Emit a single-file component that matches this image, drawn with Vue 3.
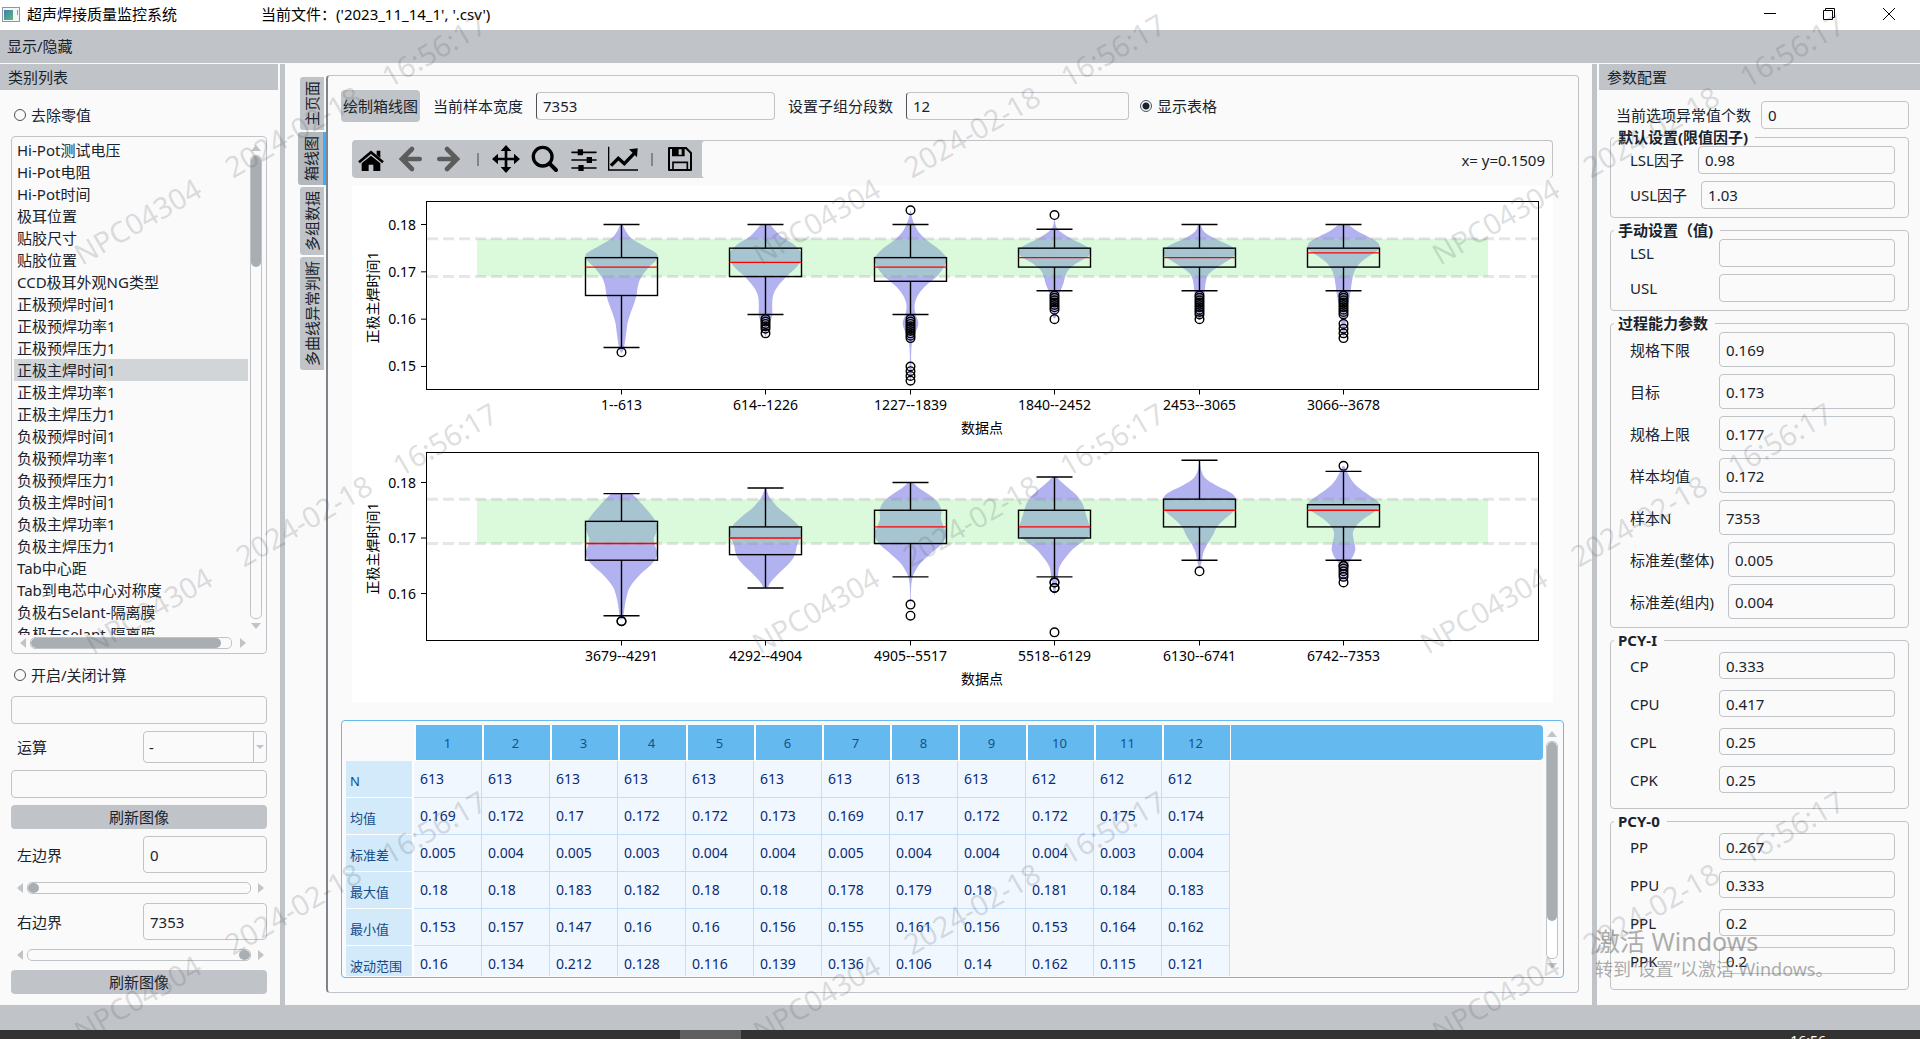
<script setup>
import { ref } from 'vue'

const categories = [
  'Hi-Pot测试电压', 'Hi-Pot电阻', 'Hi-Pot时间', '极耳位置', '贴胶尺寸', '贴胶位置',
  'CCD极耳外观NG类型', '正极预焊时间1', '正极预焊功率1', '正极预焊压力1', '正极主焊时间1',
  '正极主焊功率1', '正极主焊压力1', '负极预焊时间1', '负极预焊功率1', '负极预焊压力1',
  '负极主焊时间1', '负极主焊功率1', '负极主焊压力1', 'Tab中心距', 'Tab到电芯中心对称度',
  '负极右Selant-隔离膜', '负极左Selant-隔离膜'
]
const selected = ref('正极主焊时间1')
const tabs = ['主页面', '箱线图', '多组数据', '多曲线异常判断']
const activeTab = ref('箱线图')
const leftBound = ref(0)
const rightBound = ref(7353)

const groups = [
  { title: '默认设置(限值因子)', kind: 'tight', rows: [['LSL因子', '0.98'], ['USL因子', '1.03']] },
  { title: '手动设置（值)', kind: '', rows: [['LSL', ''], ['USL', '']] },
  {
    title: '过程能力参数', kind: 'grow', rows: [
      ['规格下限', '0.169'], ['目标', '0.173'], ['规格上限', '0.177'], ['样本均值', '0.172'],
      ['样本N', '7353'], ['标准差(整体)', '0.005'], ['标准差(组内)', '0.004']
    ]
  },
  { title: 'PCY-I', kind: 'airy', rows: [['CP', '0.333'], ['CPU', '0.417'], ['CPL', '0.25'], ['CPK', '0.25']] },
  { title: 'PCY-0', kind: 'airy', rows: [['PP', '0.267'], ['PPU', '0.333'], ['PPL', '0.2'], ['PPK', '0.2']] }
]

const stats = [
  ['N', '613', '613', '613', '613', '613', '613', '613', '613', '613', '612', '612', '612'],
  ['均值', '0.169', '0.172', '0.17', '0.172', '0.172', '0.173', '0.169', '0.17', '0.172', '0.172', '0.175', '0.174'],
  ['标准差', '0.005', '0.004', '0.005', '0.003', '0.004', '0.004', '0.005', '0.004', '0.004', '0.004', '0.003', '0.004'],
  ['最大值', '0.18', '0.18', '0.183', '0.182', '0.18', '0.18', '0.178', '0.179', '0.18', '0.181', '0.184', '0.183'],
  ['最小值', '0.153', '0.157', '0.147', '0.16', '0.16', '0.156', '0.155', '0.161', '0.156', '0.153', '0.164', '0.162'],
  ['波动范围', '0.16', '0.134', '0.212', '0.128', '0.116', '0.139', '0.136', '0.106', '0.14', '0.162', '0.115', '0.121']
]

// Box plots: [low whisker, q1, median, q3, high whisker] in thousandths.
// Violin profile: [y, half width] pairs in thirds of a pixel below the origin.
const centers = [621.5, 765.5, 910.5, 1054.5, 1199.5, 1343.5]
const charts = [
  {
    top: 201.5, bottom: 389.5, y180: 224.5, step: 4.733, origin: 60, ticks: [180, 170, 160, 150],
    items: [
      { label: '1--613', box: [154, 165, 171, 173, 180], out: [153], k: 3,
        v: [[493, 3], [515, 14], [535, 30], [555, 62], [575, 98], [585, 108], [600, 104], [622, 82], [650, 60], [675, 50], [706, 45], [730, 38], [760, 27], [790, 18], [820, 14], [860, 8], [878, 2]] },
      { label: '614--1226', box: [161, 169, 172, 175, 180], out: [160, 159.5, 159, 158.5, 158, 157], k: 3,
        v: [[493, 14], [510, 28], [530, 48], [550, 80], [570, 102], [585, 108], [600, 107], [625, 90], [650, 62], [680, 36], [706, 23], [735, 20], [765, 20], [790, 13], [820, 4], [830, 1]] },
      { label: '1227--1839', box: [161, 168, 171, 173, 180], out: [183, 160, 159.5, 159, 158.5, 158, 157.5, 157, 156.5, 156, 150, 149, 148, 147], k: 3,
        v: [[452, 1], [475, 5], [493, 12], [515, 24], [540, 48], [565, 82], [590, 106], [605, 107], [625, 98], [650, 78], [675, 48], [700, 26], [725, 14], [745, 12], [765, 16], [785, 23], [800, 22], [820, 14], [845, 5], [880, 2], [905, 2], [935, 4], [963, 1]] },
      { label: '1840--2452', box: [166, 171, 173, 175, 179], out: [182, 165, 164.5, 164, 163.5, 163, 162.5, 162, 160], k: 3,
        v: [[478, 1], [500, 5], [515, 18], [535, 48], [550, 78], [565, 104], [575, 108], [590, 100], [610, 66], [630, 42], [650, 32], [670, 27], [690, 19], [710, 13], [740, 10], [775, 3]] },
      { label: '2453--3065', box: [166, 171, 173, 175, 180], out: [165, 164.5, 164, 163.5, 163, 162.5, 162, 161.5, 161, 160], k: 3,
        v: [[493, 3], [515, 14], [535, 44], [555, 88], [570, 107], [585, 107], [600, 88], [620, 56], [640, 30], [660, 20], [690, 16], [720, 13], [750, 9], [780, 3]] },
      { label: '3066--3678', box: [166, 171, 174, 175, 180], out: [165, 164.5, 164, 163.5, 163, 162.5, 162, 161.5, 161, 159, 158, 157, 156], k: 3,
        v: [[493, 14], [510, 36], [530, 74], [545, 100], [558, 108], [570, 104], [585, 82], [605, 54], [625, 38], [650, 28], [690, 22], [720, 17], [750, 10], [790, 7], [830, 2]] }
    ]
  },
  {
    top: 452.5, bottom: 640.5, y180: 482.5, step: 5.55, origin: 430, ticks: [180, 170, 160],
    items: [
      { label: '3679--4291', box: [156, 166, 169, 173, 178], out: [155, 155], k: 2.529,
        v: [[190, 25], [210, 42], [240, 65], [270, 85], [290, 91], [310, 87], [325, 82], [340, 83], [365, 90], [385, 87], [405, 74], [435, 46], [470, 22], [500, 13], [530, 8], [568, 4]] },
      { label: '4292--4904', box: [161, 167, 170, 172, 179], out: [], k: 2.529,
        v: [[176, 2], [205, 12], [235, 34], [260, 60], [285, 82], [305, 91], [322, 88], [345, 80], [375, 74], [400, 60], [430, 34], [455, 14], [472, 6]] },
      { label: '4905--5517', box: [163, 169, 172, 175, 180], out: [158, 156], k: 2.529,
        v: [[157, 5], [175, 22], [195, 48], [215, 68], [240, 78], [265, 77], [290, 84], [305, 91], [325, 88], [345, 76], [370, 52], [400, 25], [430, 9], [455, 3], [490, 1], [520, 1]] },
      { label: '5518--6129', box: [163, 170, 172, 175, 181], out: [162, 162, 161, 161, 153], k: 2.376,
        v: [[140, 4], [155, 16], [175, 34], [195, 52], [220, 66], [250, 74], [275, 80], [300, 86], [315, 84], [330, 72], [355, 46], [380, 28], [410, 12], [440, 8], [470, 4], [495, 1]] },
      { label: '6130--6741', box: [166, 172, 175, 177, 184], out: [164], k: 2.376,
        v: [[92, 1], [120, 4], [145, 14], [165, 38], [185, 70], [200, 84], [225, 86], [245, 80], [265, 62], [290, 42], [315, 32], [340, 20], [365, 10], [390, 6], [415, 1]] },
      { label: '6742--7353', box: [166, 172, 175, 176, 182], out: [183, 165, 165, 164.5, 164, 163.5, 163, 162], k: 2.376,
        v: [[108, 2], [130, 10], [155, 22], [175, 38], [195, 60], [215, 82], [228, 86], [245, 74], [265, 50], [285, 32], [305, 23], [320, 23], [340, 26], [360, 28], [380, 22], [400, 12], [430, 6], [455, 2]] }
    ]
  }
]

const toY = (c, v) => c.y180 + (180 - v) * c.step

function smooth(pts) {
  let d = ''
  for (let i = 0; i < pts.length - 1; i++) {
    const a = pts[Math.max(i - 1, 0)]
    const b = pts[i]
    const n = pts[i + 1]
    const e = pts[Math.min(i + 2, pts.length - 1)]
    const q = [b[0] + (n[0] - a[0]) / 6, b[1] + (n[1] - a[1]) / 6, n[0] - (e[0] - b[0]) / 6, n[1] - (e[1] - b[1]) / 6, n[0], n[1]]
    d += 'C' + q.map((x) => x.toFixed(1)).join(' ')
  }
  return d
}

function violin(c, item, i) {
  const at = (s) => item.v.map(([y, w]) => [centers[i] + (s * w) / item.k, c.origin + y / 3])
  const right = at(1)
  const left = at(-1).reverse()
  return `M${right[0]}${smooth(right)}L${left[0]}${smooth(left)}Z`
}

const marks = [
  [82, 266], [761, 266], [1440, 266],
  [93, 655], [760, 655], [1428, 655],
  [82, 1043], [761, 1043], [1440, 1043]
]
</script>

<template>
  <div class="window">
    <header class="titlebar">
      <svg class="app-icon" width="18" height="15" viewBox="0 0 18 15" aria-hidden="true">
        <defs>
          <linearGradient id="appfill" x1="0" y1="0" x2="1" y2="1">
            <stop offset="0" stop-color="#3d7fb5" />
            <stop offset="1" stop-color="#5fb878" />
          </linearGradient>
        </defs>
        <rect x="0.5" y="0.5" width="17" height="14" fill="#f3f5f6" stroke="#8c979e" />
        <rect x="2" y="3" width="9" height="10" fill="url(#appfill)" />
        <rect x="15" y="3" width="1" height="5" fill="#5fb878" />
      </svg>
      <h1>超声焊接质量监控系统</h1>
      <span class="file">当前文件：('2023_11_14_1', '.csv')</span>
      <div class="controls">
        <button aria-label="最小化"><svg width="14" height="14"><path d="M1 6.5H13" /></svg></button>
        <button aria-label="还原"><svg width="14" height="14"><path d="M1.5 3.5H10.5V12.5H1.5ZM3.5 3.500V1.5H12.500V10.500H10.500" /></svg></button>
        <button aria-label="关闭"><svg width="14" height="14"><path d="M1 1L13 13M13 1L1 13" /></svg></button>
      </div>
    </header>
    <nav class="menubar"><button>显示/隐藏</button></nav>

    <main class="body">
      <aside class="dock left">
        <h2>类别列表</h2>
        <div class="left-content">
          <label class="radio"><input type="radio" name="zero" />去除零值</label>
          <div class="listbox">
            <div class="list-row">
              <ul>
                <li v-for="c in categories" :key="c" :class="{ on: c === selected }" @click="selected = c">{{ c }}</li>
              </ul>
              <div class="vbar" aria-hidden="true">
                <i class="tri up"></i><div class="track"><div class="thumb"></div></div><i class="tri down"></i>
              </div>
            </div>
            <div class="hbar" aria-hidden="true">
              <i class="tri lt"></i><div class="track"><div class="thumb"></div></div><i class="tri rt"></i>
            </div>
          </div>
          <label class="radio"><input type="radio" name="calc" />开启/关闭计算</label>
          <input class="field" aria-label="操作数一" />
          <div class="pair">
            <label for="op">运算</label>
            <div class="select"><select id="op"><option>-</option><option>+</option></select></div>
          </div>
          <input class="field" aria-label="操作数二" />
          <button class="action">刷新图像</button>
          <div class="pair tall"><label for="lb">左边界</label><input id="lb" v-model="leftBound" class="field" /></div>
          <div class="slider"><i class="tri lt"></i><input v-model="leftBound" type="range" min="0" max="7353" aria-label="左边界滑块" /><i class="tri rt"></i></div>
          <div class="pair tall"><label for="rb">右边界</label><input id="rb" v-model="rightBound" class="field" /></div>
          <div class="slider"><i class="tri lt"></i><input v-model="rightBound" type="range" min="0" max="7353" aria-label="右边界滑块" /><i class="tri rt"></i></div>
          <button class="action">刷新图像</button>
        </div>
      </aside>

      <section class="center">
        <div class="tabs" role="tablist">
          <button v-for="t in tabs" :key="t" role="tab" :aria-selected="t === activeTab" :class="{ on: t === activeTab }" @click="activeTab = t"><span>{{ t }}</span></button>
        </div>
        <div class="pane">
          <div class="options">
            <button class="action draw">绘制箱线图</button>
            <label for="width">当前样本宽度</label>
            <input id="width" class="field w-sample" value="7353" />
            <label for="segments">设置子组分段数</label>
            <input id="segments" class="field w-segments" value="12" />
            <label class="radio"><input type="radio" name="table" checked />显示表格</label>
          </div>

          <div class="toolbar">
            <div class="tools">
              <button aria-label="主视图">
                <svg viewBox="201 257 84 84"><path d="M207 309L243 279L279 309" fill="none" stroke="#000" stroke-width="8" /><path d="M260 274h11v22l-11 -9zM215 312L243 289L271 312V335H250V316H236V335H215Z" /></svg>
              </button>
              <button aria-label="后退">
                <svg viewBox="319 257 84 84"><path d="M367 269L337 299L367 329M337 299H390" fill="none" stroke="#5c5c5c" stroke-width="14" stroke-linecap="round" /></svg>
              </button>
              <button aria-label="前进">
                <svg viewBox="434 257 84 84"><path d="M470 269L500 299L470 329M500 299H447" fill="none" stroke="#5c5c5c" stroke-width="14" stroke-linecap="round" /></svg>
              </button>
              <i class="sep"></i>
              <button aria-label="平移">
                <svg viewBox="606 257 84 84"><path d="M648 270V328M619 299H677" stroke="#000" stroke-width="8" /><path d="M648 257L664 275H632ZM648 341L664 323H632ZM606 299L624 283V315ZM690 299L672 283V315Z" /></svg>
              </button>
              <button aria-label="缩放">
                <svg viewBox="723 257 84 84"><circle cx="758" cy="292" r="28" fill="none" stroke="#000" stroke-width="10" /><path d="M779 313L798 332" stroke="#000" stroke-width="12" stroke-linecap="round" /></svg>
              </button>
              <button aria-label="子图设置">
                <svg viewBox="840 257 84 84"><path d="M846 279H918M846 302H918M846 326H918" stroke="#000" stroke-width="5" stroke-linecap="round" /><path d="M863 270h16v18h-16zM890 293h16v18h-16zM865 317h16v18h-16z" /></svg>
              </button>
              <button aria-label="编辑曲线">
                <svg class="wide" viewBox="954 257 90 84"><path d="M956 262V332H1044" fill="none" stroke="#000" stroke-width="4" /><path d="M963 319L985 297L1003 313L1032 283" fill="none" stroke="#000" stroke-width="10" /><path d="M1017 270L1043 267L1041 294Z" /></svg>
              </button>
              <i class="sep"></i>
              <button aria-label="保存">
                <svg viewBox="1128 257 84 84"><path d="M1137 266H1188L1203 281V332H1137Z" fill="none" stroke="#000" stroke-width="6" stroke-linejoin="round" /><path fill-rule="evenodd" d="M1146 266H1184V291H1146ZM1166 270V286H1175V270Z" /><path d="M1149 332V309H1192V332" fill="none" stroke="#000" stroke-width="5" /></svg>
              </button>
            </div>
            <output>x= y=0.1509</output>
          </div>

          <svg class="figure" viewBox="352 186 1201 516" role="img" aria-label="正极主焊时间1 箱线图">
            <g v-for="(c, n) in charts" :key="n">
              <path v-for="(it, i) in c.items" :key="'v' + i" :d="violin(c, it, i)" fill="#0000cd" fill-opacity="0.3" />
              <rect x="477" :y="toY(c, 177)" width="1011" :height="toY(c, 169) - toY(c, 177)" fill="#90ee90" fill-opacity="0.32" />
              <path v-for="v in [177, 169]" :key="v" :d="`M427 ${toY(c, v)}H1538`" stroke="#808080" stroke-opacity="0.2" stroke-width="3" stroke-dasharray="11 5" />
              <g fill="none" stroke="#000" stroke-width="1.4">
                <template v-for="(it, i) in c.items" :key="'b' + i">
                  <rect :x="centers[i] - 36" :y="toY(c, it.box[3])" width="72" :height="toY(c, it.box[1]) - toY(c, it.box[3])" />
                  <path :d="`M${centers[i]} ${toY(c, it.box[3])}V${toY(c, it.box[4])}M${centers[i]} ${toY(c, it.box[1])}V${toY(c, it.box[0])}M${centers[i] - 18} ${toY(c, it.box[4])}h36M${centers[i] - 18} ${toY(c, it.box[0])}h36`" />
                  <path :d="`M${centers[i] - 36} ${toY(c, it.box[2])}h72`" stroke="#f00" />
                  <circle v-for="(o, k) in it.out" :key="k" :cx="centers[i]" :cy="toY(c, o)" r="4.300" />
                </template>
              </g>
              <rect x="426.5" :y="c.top" width="1112" :height="c.bottom - c.top" fill="none" stroke="#000" />
              <template v-for="t in c.ticks" :key="'t' + t">
                <path :d="`M421 ${toY(c, t)}H426`" stroke="#000" />
                <text x="416" :y="toY(c, t) + 5" text-anchor="end">0.{{ t / 10 }}</text>
              </template>
              <template v-for="(it, i) in c.items" :key="'x' + i">
                <path :d="`M${centers[i]} ${c.bottom}v5`" stroke="#000" />
                <text :x="centers[i]" :y="c.bottom + 20" text-anchor="middle">{{ it.label }}</text>
              </template>
              <text x="982" :y="c.bottom + 43" text-anchor="middle">数据点</text>
              <text :transform="`translate(378 ${(c.top + c.bottom) / 2 + 2}) rotate(-90)`" text-anchor="middle">正极主焊时间1</text>
            </g>
          </svg>

          <div class="grid">
            <div class="grid-view">
              <table>
                <colgroup><col v-for="n in 13" :key="n" class="c" /><col /></colgroup>
                <thead>
                  <tr><td class="corner"></td><th v-for="n in 12" :key="n" scope="col">{{ n }}</th><td class="rest"></td></tr>
                </thead>
                <tbody>
                  <tr v-for="r in stats" :key="r[0]">
                    <th scope="row">{{ r[0] }}</th>
                    <td v-for="(v, i) in r.slice(1)" :key="i">{{ v }}</td>
                  </tr>
                </tbody>
              </table>
            </div>
            <div class="vbar" aria-hidden="true">
              <i class="tri up"></i><div class="track"><div class="thumb"></div></div><i class="tri down"></i>
            </div>
          </div>
        </div>
      </section>

      <aside class="dock right">
        <h2>参数配置</h2>
        <div class="right-content">
          <div class="outliers"><label for="outliers">当前选项异常值个数</label><input id="outliers" class="field" value="0" /></div>
          <fieldset v-for="g in groups" :key="g.title" :class="g.kind">
            <legend>{{ g.title }}</legend>
            <div v-for="r in g.rows" :key="r[0]" class="param">
              <label :for="g.title + r[0]">{{ r[0] }}</label>
              <input :id="g.title + r[0]" class="field" :value="r[1]" />
            </div>
          </fieldset>
        </div>
      </aside>
    </main>
    <footer class="status"></footer>
    <div class="taskbar"><i class="task"></i><time>16:56</time></div>

    <svg class="watermark" aria-hidden="true">
      <g v-for="(m, i) in marks" :key="i" :transform="`translate(${m[0]} ${m[1]}) rotate(-30)`">
        <text x="0">NPC04304</text><text x="174">2024-02-18</text><text x="355">16:56:17</text>
      </g>
    </svg>
    <div class="activate"><strong>激活 Windows</strong><span>转到“设置”以激活 Windows。</span></div>
  </div>
</template>

<style>
body { margin: 0; background: #fafafa; }
</style>

<style scoped>
* { box-sizing: border-box; }
.window {
  position: relative;
  display: flex;
  flex-direction: column;
  height: 100vh;
  min-height: 960px;
  overflow: hidden;
  background: #fafafa;
  color: #19232d;
  font: 15px/20px "Noto Sans", "Noto Sans CJK SC", sans-serif;
}
button, input, select { font: inherit; color: inherit; }
button { border: 0; padding: 0; background: none; }

.titlebar { display: flex; align-items: center; height: 30px; padding: 0 0 2px 2px; background: #fff; color: #000; }
.titlebar h1 { margin: 0 84px 0 7px; font-size: 15px; font-weight: 400; line-height: 20px; }
.controls { display: flex; margin-left: auto; }
.controls button { width: 59px; height: 28px; }
.controls button:last-child { width: 62px; }
.controls svg { display: block; margin: auto; fill: none; stroke: #000; }
.menubar { height: 33px; margin-bottom: 1px; padding-left: 7px; background: #c0c4c8; }
.menubar button { height: 31px; }

.body { display: flex; flex: 1; min-height: 0; }
.dock { display: flex; flex-direction: column; flex: none; }
.dock h2 { flex: none; height: 26px; margin: 0; padding: 3px 8px; background: #c0c4c8; font-size: 15px; font-weight: 400; line-height: 20px; }
.left { width: 285px; border-right: 5px solid #c0c4c8; padding-right: 2px; }
.left-content { display: flex; flex: 1; flex-direction: column; gap: 7px; min-height: 0; padding: 11px; }

.field { min-width: 0; height: 28px; padding: 0 6px; border: 1px solid #c0c4c8; border-radius: 4px; background: #fafafa; outline: 0; }
.radio { display: flex; align-items: center; flex: none; gap: 5px; height: 28px; }
.radio input { appearance: none; width: 12px; height: 12px; margin: 0; border: 1px solid #4a525a; border-radius: 50%; }
.left .radio { padding-left: 3px; }
.radio input:checked { background: radial-gradient(circle, #19232d 3px, transparent 4px); }
.action { flex: none; height: 24px; border-radius: 4px; background: #c0c4c8; }

.listbox { display: flex; flex: 1 1 0; flex-direction: column; min-height: 200px; padding: 2px; border: 1px solid #c0c4c8; border-radius: 4px; }
.list-row { display: flex; flex: 1; min-height: 0; }
.list-row ul { flex: 1; margin: 0; padding: 0; overflow: hidden; list-style: none; white-space: nowrap; }
.list-row li { height: 22px; padding-left: 3px; line-height: 22px; }
.list-row li.on { background: #d2d5d8; }

.tri { flex: none; width: 0; height: 0; border: 5px solid transparent; }
.tri.up { border-top: 0; border-bottom: 6px solid #c0c4c8; }
.tri.down { border-bottom: 0; border-top: 6px solid #c0c4c8; }
.tri.lt { border-left: 0; border-right: 6px solid #c0c4c8; }
.tri.rt { border-right: 0; border-left: 6px solid #c0c4c8; }
.vbar { display: flex; flex: none; flex-direction: column; align-items: center; gap: 4px; width: 16px; padding: 6px 0; }
.vbar .track { flex: 1; width: 12px; border: 1px solid #c0c4c8; border-radius: 5px; background: #fff; }
.vbar .thumb { border-radius: 5px; background: #a9aeb3; }
.listbox .thumb { height: 24%; }
.listbox .track { background: #fafafa; }
.hbar { display: flex; align-items: center; gap: 4px; height: 16px; padding: 0 18px 0 6px; }
.hbar .track { flex: 1; height: 12px; margin-right: 4px; border: 1px solid #c0c4c8; border-radius: 5px; }
.hbar .thumb { width: 95%; height: 100%; border-radius: 5px; background: #a9aeb3; }

.pair { display: flex; align-items: center; flex: none; height: 32px; padding-left: 6px; }
.pair label { flex: 1; }
.pair .field, .select { width: 124px; height: 100%; }
.pair.tall { height: 37px; }
.select { position: relative; }
.select select { appearance: none; width: 100%; height: 100%; padding: 0 5px; border: 1px solid #c0c4c8; border-radius: 4px; background: #fafafa; }
.select::before { content: ""; position: absolute; inset: 0 13px 0 auto; border-left: 1px solid #c0c4c8; }
.select::after { content: ""; position: absolute; top: 14px; right: 3px; border: 4px solid transparent; border-top-color: #c0c4c8; border-bottom: 0; }
.slider { display: flex; align-items: center; flex: none; gap: 4px; height: 16px; padding: 0 3px 0 6px; }
.slider .rt { margin-left: 3px; }
.slider input { appearance: none; flex: 1; min-width: 0; height: 12px; margin: 0; border: 1px solid #c0c4c8; border-radius: 5px; background: #fafafa; }
.slider input::-webkit-slider-thumb { appearance: none; width: 11px; height: 10px; border-radius: 50%; background: #a9aeb3; }

.center { display: flex; flex: 1; min-width: 0; padding: 11px 13px 12px; }
.tabs { display: flex; flex: none; flex-direction: column; gap: 2px; width: 28px; padding-top: 2px; }
.tabs button { align-self: flex-start; width: 24px; margin-left: 2px; padding: 4px 0; border-radius: 3px 0 0 3px; background: #c0c4c8; }
.tabs button.on { width: 28px; margin-left: 0; border-right: 3px solid #37aefe; background: #b4b8bd; }
.tabs span { display: block; margin: auto; writing-mode: vertical-rl; text-orientation: sideways; transform: rotate(180deg); line-height: 24px; }
.pane { display: flex; flex: 1; flex-direction: column; min-width: 0; padding: 14px 14px 14px 13px; border: 1px solid #c0c4c8; border-left: 2px solid #7f838a; border-radius: 4px; }
.options { display: flex; align-items: center; height: 32px; }
.draw { width: 79px; height: 32px; margin-right: 13px; }
.options .field { margin: 0 13px; border-left-color: #4c5157; }
.options .w-sample { width: 239px; }
.options .w-segments { width: 223px; margin-right: 11px; }

.toolbar { display: flex; height: 38px; margin: 18px 11px 8px 11px; border-radius: 4px; background: #c0c4c8; overflow: hidden; }
.tools { display: flex; align-items: center; flex: none; width: 349px; }
.tools button { width: 39px; height: 38px; }
.tools svg { display: block; width: 28px; height: 28px; margin: 0 auto 0 5px; }
.tools svg.wide { width: 30px; margin-left: 4px; }
.sep { width: 2px; height: 13px; margin: 0 8px; background: #82868b; }
.toolbar output { flex: 1; padding: 9px 7px; border: 1px solid #c0c4c8; border-bottom: 0; border-radius: 4px; background: #fafafa; text-align: right; }

.figure { display: block; margin: 0 11px 18px 11px; background: #fff; }
.figure text { font-size: 14px; fill: #000; }

.grid { display: flex; flex: 1 1 0; gap: 1px; min-height: 180px; padding: 4px 3px 1px 4px; border: 1px solid #64b9ee; border-radius: 4px; }
.grid-view { flex: 1; min-width: 0; overflow: hidden; background: #f8f8f8; }
.grid table { width: 100%; border-spacing: 0; table-layout: fixed; font-size: 14px; }
.grid .c { width: 68px; }
.grid td, .grid th { height: 37px; padding: 0 0 0 6px; border: solid #c2e0fc; border-width: 0 1px 1px 0; background: #f0f7ff; color: #0c2a72; font-weight: 400; text-align: left; }
.grid thead th, .grid thead td { height: 36px; padding: 0 3px 0 0; border: 0 solid #fff; border-left-width: 2px; border-bottom-width: 1px; background: #64baee; color: #15508f; text-align: center; font-size: 13px; }
.grid thead .corner { background: #fafafa; border: 0; }
.grid thead .rest { border-left-width: 1px; border-radius: 0 4px 4px 0; }
.grid tbody th { padding: 4px 0 0 4px; border-color: #fff; border-right-width: 2px; background: #d2eafa; color: #154b86; font-size: 13px; }
.grid .vbar { padding: 6px 0 7px; }
.grid .thumb { height: 83%; }

.right { width: 328px; padding-left: 2px; border-left: 5px solid #c0c4c8; }
.right-content { display: flex; flex: 1; flex-direction: column; gap: 4px; padding: 11px 11px 15px; min-height: 0; }
.outliers { display: flex; align-items: center; gap: 10px; margin-bottom: -4px; padding-left: 6px; }
.outliers label { flex: none; }
.outliers .field { flex: 1; }
fieldset { display: flex; flex-direction: column; flex: none; gap: 7px; min-width: 0; margin: 0; padding: 1px 13px 8px 19px; border: 1px solid #c0c4c8; border-radius: 4px; }
legend { margin-left: -16px; padding: 0 7px 0 4px; font-weight: 700; line-height: 16px; }
.param { display: flex; align-items: center; gap: 14px; }
.param label { flex: none; min-width: 75px; }
.param .field { flex: 1; }
.tight .param label { min-width: 0; }
.grow { flex: 1; }
.grow .param { flex: 1; }
.grow .field { height: 100%; }
.airy { gap: 11px; padding-top: 4px; padding-bottom: 15px; }
.airy .field { height: 27px; }

.status { flex: none; height: 25px; background: #c0c4c8; }
.taskbar { position: relative; z-index: 2; display: flex; flex: none; height: 9px; padding: 0 94px 0 680px; background: #333; overflow: hidden; color: #fff; font-size: 14px; }
.task { width: 61px; background: #5f5f5f; }
.taskbar time { margin-left: auto; line-height: 22px; }
.watermark { position: absolute; inset: 0; width: 100%; height: 100%; pointer-events: none; }
.watermark text { font-size: 29px; fill: #50565c; fill-opacity: 0.2; }
.activate { position: absolute; right: 0; bottom: 58px; display: flex; flex-direction: column; width: 325px; color: #6e6e6e; opacity: 0.55; font-size: 18px; line-height: 24px; pointer-events: none; }
.activate strong { font-size: 25px; font-weight: 400; line-height: 32px; }
</style>
